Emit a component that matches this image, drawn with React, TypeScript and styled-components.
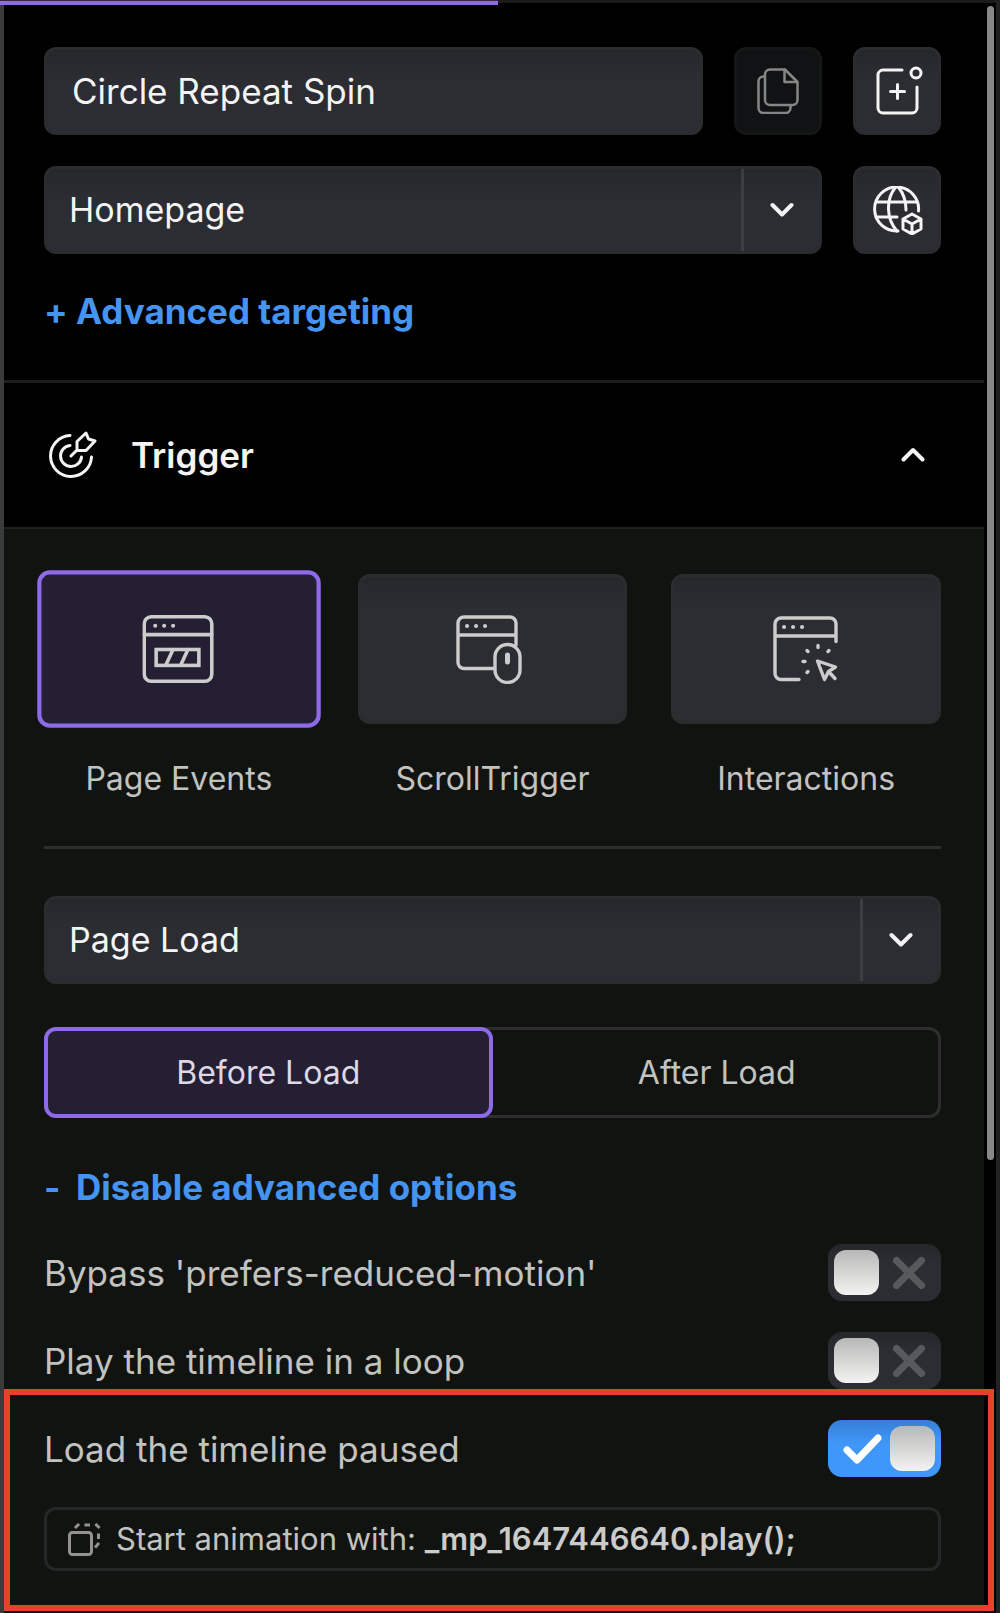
import React, { useState } from 'react';
import styled, { createGlobalStyle, css } from 'styled-components';

const color = {
  panel: '#000000',
  body: '#111311',
  control: '#2c2d33',
  controlEdge: '#2b2c2d',
  line: '#1d1e1e',
  rule: '#2c2d2c',
  accent: '#8f6ae8',
  accentFill: '#241f33',
  link: '#4594f2',
  text: '#f4f4f4',
  muted: '#c2c3c1',
  mark: '#e5432a',
};

const size = {
  large: '35px',
  field: '34px',
  label: '32px',
  code: '31px',
};

const GlobalStyle = createGlobalStyle`
  *, *::before, *::after { box-sizing: border-box; }
  body {
    margin: 0;
    background: ${color.panel};
    color: ${color.text};
    font-family: Inter, "Liberation Sans", sans-serif;
    font-size: ${size.large};
    line-height: 40px;
  }
  button, input, select { font: inherit; color: inherit; margin: 0; }
  button { cursor: pointer; }
  svg { display: block; flex: none; }
`;

const Window = styled.div`
  display: flex;
  min-height: 100vh;
`;

const Edge = styled.div<{ $right?: boolean }>`
  flex: none;
  width: 4px;
  background: ${(p) => (p.$right ? '#202122' : '#3a3b3b')};
`;

const Panel = styled.main`
  flex: 1;
  min-width: 0;
  display: flex;
  flex-direction: column;
`;

const Gutter = styled.div`
  flex: none;
  width: 12px;
  padding: 6px 2px 0 3px;
`;

const Thumb = styled.div`
  height: 71.8%;
  border-radius: 4px;
  background: #888888;
`;

const Progress = styled.progress`
  appearance: none;
  display: block;
  width: calc(100% + 16px);
  margin-left: -4px;
  height: 5px;
  border: 0;
  background: linear-gradient(#1b1b1b 3px, #000000 3px);
  &::-webkit-progress-bar { background: transparent; }
  &::-webkit-progress-value {
    background: ${color.accent};
    border-top: 1px solid #33264f;
  }
`;

const Targeting = styled.section`
  padding: 42px 43px 43px 40px;
  border-bottom: 3px solid ${color.line};
  display: flex;
  flex-direction: column;
  gap: 31px;
`;

const Row = styled.div`
  display: flex;
  gap: 31px;
`;

const surface = css`
  border: 3px solid ${color.controlEdge};
  border-radius: 12px;
  background: linear-gradient(#26272b, ${color.control} 28px);
`;

const NameInput = styled.input`
  ${surface}
  flex: 1;
  min-width: 0;
  height: 88px;
  padding: 0 25px;
  outline: none;
`;

const IconButton = styled.button`
  ${surface}
  flex: none;
  width: 88px;
  height: 88px;
  padding: 0;
  display: flex;
  align-items: center;
  justify-content: center;
  &:disabled {
    background: #111213;
    border-color: #151616;
    color: #868686;
    cursor: default;
  }
`;

const SelectBox = styled.div`
  ${surface}
  flex: 1;
  min-width: 0;
  height: 88px;
  display: grid;
  font-size: ${size.field};
`;

const NativeSelect = styled.select`
  grid-area: 1 / 1;
  appearance: none;
  width: 100%;
  border: 0;
  padding: 0 100px 0 22px;
  background: transparent;
  outline: none;
`;

const SelectArrow = styled.span`
  grid-area: 1 / 1;
  justify-self: end;
  width: 78px;
  border-left: 3px solid #3d3e41;
  display: flex;
  align-items: center;
  justify-content: center;
  pointer-events: none;
`;

const LinkButton = styled.button`
  align-self: flex-start;
  display: flex;
  padding: 0;
  border: 0;
  background: none;
  color: ${color.link};
  font-weight: 700;
  line-height: 52px;
  text-align: left;
`;

const Sign = styled.span`
  width: 32px;
`;

const SectionHeading = styled.h2`
  margin: 0;
  font-size: ${size.large};
`;

const SectionToggle = styled.button`
  width: 100%;
  height: 144px;
  padding: 0 59px 0 45px;
  border: 0;
  background: none;
  display: flex;
  align-items: center;
  gap: 34px;
  font-weight: 600;
  text-align: left;
`;

const SectionTitle = styled.span`
  flex: 1;
`;

const TriggerBody = styled.section`
  flex: 1;
  padding: 45px 43px 42px 40px;
  border-top: 2px solid #1f2120;
  background: ${color.body};
  color: ${color.muted};
  display: flex;
  flex-direction: column;
`;

const Cards = styled.div`
  display: grid;
  grid-template-columns: repeat(3, 1fr);
  gap: 44px;
  padding-bottom: 47px;
  border-bottom: 3px solid ${color.rule};
`;

const Card = styled.div`
  display: flex;
  flex-direction: column;
  gap: 35px;
  text-align: center;
  font-size: ${size.label};
`;

const CardButton = styled.button<{ $active: boolean }>`
  ${surface}
  height: 150px;
  padding: 0;
  display: flex;
  align-items: center;
  justify-content: center;
  color: #cccccd;
  ${(p) =>
    p.$active &&
    css`
      border: 4px solid ${color.accent};
      background: ${color.accentFill};
      transform: scale(1.05);
    `}
`;

const EventField = styled.div`
  display: flex;
  margin: 47px 0 43px;
  color: ${color.text};
`;

const Segments = styled.div`
  display: flex;
  border-radius: 12px;
  box-shadow: inset 0 0 0 3px ${color.rule};
`;

const Segment = styled.button<{ $active: boolean }>`
  flex: 1;
  height: 91px;
  border: 4px solid ${(p) => (p.$active ? color.accent : 'transparent')};
  border-radius: 12px;
  background: ${(p) => (p.$active ? color.accentFill : 'transparent')};
  color: ${(p) => (p.$active ? '#dcd8e6' : color.muted)};
  font-size: ${size.label};
`;

const Options = styled.div`
  display: flex;
  flex-direction: column;
  gap: 31px;
  margin-top: 43px;
`;

const OptionRow = styled.label`
  display: flex;
  align-items: center;
  justify-content: space-between;
  height: 57px;
`;

const SwitchBox = styled.span`
  flex: none;
  width: 113px;
  display: grid;
`;

const SwitchInput = styled.input`
  grid-area: 1 / 1;
  appearance: none;
  width: 100%;
  height: 57px;
  border-radius: 14px;
  background: linear-gradient(#26272b, #2c2d33 20px);
  &:checked { background: linear-gradient(#3480d6, #4097fa 24px); }
`;

const SwitchFace = styled.span<{ $on: boolean }>`
  grid-area: 1 / 1;
  display: flex;
  flex-direction: ${(p) => (p.$on ? 'row-reverse' : 'row')};
  align-items: center;
  padding: 6px;
  pointer-events: none;
  color: ${(p) => (p.$on ? '#ffffff' : '#58595b')};
`;

const Knob = styled.span`
  width: 45px;
  height: 45px;
  border-radius: 12px;
  background: linear-gradient(#b7b8b7, #f3f3f1);
`;

const SwitchIcon = styled.span`
  flex: 1;
  display: flex;
  justify-content: center;
`;

/* Framed group that draws attention to the paused option */
const Marked = styled.div`
  position: relative;
  display: flex;
  flex-direction: column;
  gap: 30px;
  &::after {
    content: '';
    position: absolute;
    inset: -31px -53px -40px -40px;
    border: 6px solid ${color.mark};
    pointer-events: none;
  }
`;

const CodeHint = styled.div`
  display: flex;
  align-items: center;
  gap: 15px;
  height: 64px;
  padding: 0 21px;
  border: 3px solid #252726;
  border-radius: 12px;
  font-size: ${size.code};
  white-space: nowrap;
`;

const HintIcon = styled.span`
  color: #929391;
`;

const Code = styled.code`
  font-family: inherit;
  font-weight: 600;
  color: #cbccca;
`;

type ArtProps = { w: number; h: number; stroke?: number; box?: string; children: React.ReactNode };

function Art({ w, h, stroke = 3, box, children }: ArtProps) {
  return (
    <svg
      width={w}
      height={h}
      viewBox={box ?? `0 0 ${w} ${h}`}
      fill="none"
      stroke="currentColor"
      strokeWidth={stroke}
      strokeLinecap="round"
      strokeLinejoin="round"
      aria-hidden="true"
    >
      {children}
    </svg>
  );
}

const ChevronDown = () => (
  <Art w={24} h={16} stroke={4}>
    <path d="M2.5 3 12 12.5 21.5 3" />
  </Art>
);

const ChevronUp = () => (
  <Art w={24} h={16} stroke={4}>
    <path d="M2.5 12.5 12 3l9.5 9.5" />
  </Art>
);

const CopyIcon = () => (
  <Art w={42} h={46} stroke={2.5}>
    <path d="M13 1.5h15L40.5 14v18a5 5 0 0 1-5 5H13a5 5 0 0 1-5-5V6.5a5 5 0 0 1 5-5Z" />
    <path d="M27.5 2v12H40" />
    <path d="M7.5 8.5H6.5a5 5 0 0 0-5 5V40a5 5 0 0 0 5 5h22a5 5 0 0 0 5-5v-2.5" />
  </Art>
);

const AddIcon = () => (
  <Art w={54} h={54} box="-6 0 54 54">
    <path d="M26 6H7a5 5 0 0 0-5 5v33a5 5 0 0 0 5 5h29a5 5 0 0 0 5-5V23" />
    <circle cx="40" cy="9" r="5" />
    <path d="M21.5 20.5v14M14.5 27.5h14" />
  </Art>
);

const GlobeIcon = () => (
  <Art w={52} h={49} box="-3 0 52 49">
    <path d="M44.5 25A22 22 0 1 0 24 45" />
    <path d="M3 16h40M2 31h21" />
    <path d="M21 2c-9 11-9 31 2 43M25 2c4 5 7 13 7 22" />
    <path d="m38 28 9 5v10l-9 5-9-5V33ZM29 33l9 5 9-5M38 38v9" />
  </Art>
);

const TargetIcon = () => (
  <Art w={48} h={48}>
    <path d="M21 4.5A20.5 20.5 0 1 0 42.5 26" />
    <path d="M21 14.5A10.5 10.5 0 1 0 32.5 26" />
    <path d="m22 25 6-6M28 19.500v-9L37 2l2.500 6L46 10l-9 9.500Z" />
  </Art>
);

const Dots = ({ x }: { x: number }) => (
  <path d={`M${x} 11h.1M${x + 9} 11h.1M${x + 18} 11h.1`} strokeWidth="4" />
);

const PageEventsIcon = () => (
  <Art w={70} h={66} stroke={3.6} box="0 0 74 69">
    <rect x="2" y="2" width="68" height="65" rx="7" />
    <path d="M2 20h68M31 35l-7 15M46 35l-7 15" />
    <rect x="14" y="35" width="43" height="16" strokeLinejoin="miter" />
    <Dots x={13} />
  </Art>
);

const ScrollIcon = () => (
  <Art w={72} h={69} stroke={3.4}>
    <path d="M38 53.5H8a6 6 0 0 1-6-6V8a6 6 0 0 1 6-6h46a6 6 0 0 1 6 6v22M2 20h58" />
    <rect x="39" y="29.5" width="25" height="38" rx="12.5" />
    <path d="M51.5 40v7" strokeWidth="5" />
    <Dots x={11} />
  </Art>
);

const ClickIcon = () => (
  <Art w={66} h={66} stroke={3.4}>
    <path d="M26 63.5H8a6 6 0 0 1-6-6V8a6 6 0 0 1 6-6h49a6 6 0 0 1 6 6v17.5M2 20h61" />
    <path d="M45 29.5v2M34 34.5l1 1M56 34.5l-1 1M30 45.5h2M34 56.5l1-1" />
    <path d="m44.5 45 18 6-7 4.5-4 8ZM56 56l6 6.5" />
    <Dots x={11} />
  </Art>
);

const StackIcon = () => (
  <Art w={33} h={33}>
    <rect x="1.5" y="9.5" width="22" height="22" rx="3" />
    <path d="m8 4 2-2M18 2h2.5M28.5 2l2 2M30.5 12v2.5M30 21l-2 2.5" strokeLinecap="square" />
  </Art>
);

const CrossIcon = () => (
  <Art w={38} h={34} stroke={7} box="-4 0 38 34">
    <path d="m4.5 4.5 25 25M29.5 4.5l-25 25" />
  </Art>
);

const CheckIcon = () => (
  <Art w={40} h={32} stroke={7}>
    <path d="m5 17 10 10L36 5" />
  </Art>
);

function Select({ label, options }: { label: string; options: string[] }) {
  return (
    <SelectBox>
      <NativeSelect aria-label={label}>
        {options.map((o) => (
          <option key={o}>{o}</option>
        ))}
      </NativeSelect>
      <SelectArrow>
        <ChevronDown />
      </SelectArrow>
    </SelectBox>
  );
}

function Option({ text, initial = false }: { text: string; initial?: boolean }) {
  const [on, setOn] = useState(initial);
  return (
    <OptionRow>
      {text}
      <SwitchBox>
        <SwitchInput type="checkbox" checked={on} onChange={() => setOn(!on)} />
        <SwitchFace $on={on}>
          <Knob />
          <SwitchIcon>{on ? <CheckIcon /> : <CrossIcon />}</SwitchIcon>
        </SwitchFace>
      </SwitchBox>
    </OptionRow>
  );
}

const triggers = [
  { name: 'Page Events', icon: <PageEventsIcon /> },
  { name: 'ScrollTrigger', icon: <ScrollIcon /> },
  { name: 'Interactions', icon: <ClickIcon /> },
];

export default function App() {
  const [trigger, setTrigger] = useState('Page Events');
  const [timing, setTiming] = useState('Before Load');

  return (
    <>
      <GlobalStyle />
      <Window>
        <Edge />
        <Panel>
          <Progress value={50} max={100} aria-label="Progress" />
          <Targeting>
            <Row>
              <NameInput aria-label="Animation name" defaultValue="Circle Repeat Spin" />
              <IconButton disabled aria-label="Copy">
                <CopyIcon />
              </IconButton>
              <IconButton aria-label="Add">
                <AddIcon />
              </IconButton>
            </Row>
            <Row>
              <Select label="Page" options={['Homepage']} />
              <IconButton aria-label="Site">
                <GlobeIcon />
              </IconButton>
            </Row>
            <LinkButton>
              <Sign>+</Sign>Advanced targeting
            </LinkButton>
          </Targeting>
          <SectionHeading>
            <SectionToggle aria-expanded="true">
              <TargetIcon />
              <SectionTitle>Trigger</SectionTitle>
              <ChevronUp />
            </SectionToggle>
          </SectionHeading>
          <TriggerBody>
            <Cards>
              {triggers.map((t) => (
                <Card key={t.name}>
                  <CardButton
                    aria-label={t.name}
                    aria-pressed={trigger === t.name}
                    $active={trigger === t.name}
                    onClick={() => setTrigger(t.name)}
                  >
                    {t.icon}
                  </CardButton>
                  <span>{t.name}</span>
                </Card>
              ))}
            </Cards>
            <EventField>
              <Select label="Page event" options={['Page Load']} />
            </EventField>
            <Segments>
              {['Before Load', 'After Load'].map((s) => (
                <Segment
                  key={s}
                  aria-pressed={timing === s}
                  $active={timing === s}
                  onClick={() => setTiming(s)}
                >
                  {s}
                </Segment>
              ))}
            </Segments>
            <Options>
              <LinkButton>
                <Sign>-</Sign>Disable advanced options
              </LinkButton>
              <Option text="Bypass 'prefers-reduced-motion'" />
              <Option text="Play the timeline in a loop" />
              <Marked>
                <Option text="Load the timeline paused" initial />
                <CodeHint>
                  <HintIcon>
                    <StackIcon />
                  </HintIcon>
                  <span>
                    Start animation with: <Code>_mp_1647446640.play();</Code>
                  </span>
                </CodeHint>
              </Marked>
            </Options>
          </TriggerBody>
        </Panel>
        <Gutter>
          <Thumb />
        </Gutter>
        <Edge $right />
      </Window>
    </>
  );
}
